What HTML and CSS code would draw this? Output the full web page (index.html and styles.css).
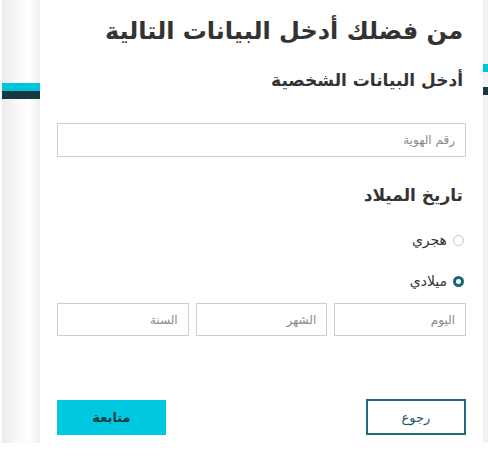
FILE: index.html
```html
<!DOCTYPE html>
<html lang="ar" dir="rtl">
<head>
  <meta charset="utf-8">
  <title>البيانات الشخصية</title>
  <meta name="viewport" content="width=device-width, initial-scale=1.0">
  <link rel="stylesheet" href="styles.css">
</head>
<body>
<div class="page">
  <aside class="side side-right">
    <span class="bar bar-cyan"></span>
    <span class="bar bar-dark"></span>
  </aside>

  <main class="card">
    <h1>من فضلك أدخل البيانات التالية</h1>
    <h2>أدخل البيانات الشخصية</h2>

    <form id="personal">
      <input class="field" type="text" placeholder="رقم الهوية">

      <h2 class="birth-title">تاريخ الميلاد</h2>

      <label class="radio">
        <input type="radio" name="calendar" value="hijri">
        <span class="dot"></span>
        هجري
      </label>
      <label class="radio">
        <input type="radio" name="calendar" value="gregorian" checked>
        <span class="dot"></span>
        ميلادي
      </label>

      <div class="date-row">
        <input class="field" type="text" placeholder="اليوم">
        <input class="field" type="text" placeholder="الشهر">
        <input class="field" type="text" placeholder="السنة">
      </div>

      <div class="actions">
        <button type="button" class="btn btn-back">رجوع</button>
        <button type="submit" class="btn btn-next">متابعة</button>
      </div>
    </form>
  </main>

  <aside class="side side-left">
    <span class="bar bar-cyan"></span>
    <span class="bar bar-dark"></span>
  </aside>
</div>
</body>
</html>
```

FILE: styles.css
```css
html {
  box-sizing: border-box;
}

*, *:before, *:after {
  box-sizing: inherit;
}

body {
  margin: 0;
  background: #fff;
  font-family: 'DejaVu Sans', 'Noto Sans', sans-serif;
  color: #333;
}

.page {
  display: flex;
  height: 443px;
}

.side {
  display: flex;
  flex-direction: column;
}

.side-left {
  width: 38px;
  margin-left: 2px;
  padding-top: 83px;
  background: linear-gradient(to right, #ebebeb, #f8f8f8 40%, #fff 70%, #eeeeee);
}

.side-right {
  width: 5px;
  padding-top: 64px;
  background: #f2f2f2;
}

.bar {
  display: block;
  height: 8px;
}

.bar-cyan {
  background: #00c3dc;
}

.bar-dark {
  background: #16383e;
}

.side-right .bar-dark {
  margin-top: 15px;
}

.card {
  flex: 1;
  padding: 13px 17px 0 17px;
  background: #fff;
}

h1 {
  margin: 0 3px 0 0;
  font-size: 24px;
  font-weight: 700;
  line-height: 36px;
  color: #333;
}

h2 {
  margin: 18px 3px 0 0;
  font-size: 17px;
  font-weight: 700;
  line-height: 26px;
  color: #333;
}

form {
  display: flex;
  flex-direction: column;
  padding-top: 30px;
}

.field {
  display: block;
  width: 100%;
  height: 34px;
  padding: 0 10px;
  border: 1px solid #c8d0d2;
  border-radius: 0;
  font-family: inherit;
  font-size: 12px;
  color: #333;
  background: #fff;
}

.field::placeholder {
  color: #8a8a8a;
}

.birth-title {
  margin-top: 25px;
  margin-bottom: 18px;
}

.radio {
  display: flex;
  align-items: center;
  gap: 6px;
  height: 28px;
  margin: 0 2px 13px 0;
  font-size: 14px;
  color: #333;
}

.radio input {
  display: none;
}

.dot {
  width: 11px;
  height: 11px;
  border: 1px solid #c4c4c4;
  border-radius: 50%;
}

.radio input:checked + .dot {
  border: 3px solid #1b6478;
}

.date-row {
  display: flex;
  gap: 7px;
  margin-top: -5px;
}

.date-row .field {
  height: 33px;
}

.actions {
  display: flex;
  justify-content: space-between;
  align-items: center;
  margin-top: 63px;
}

.btn {
  height: 35px;
  font-family: inherit;
  font-size: 13px;
  cursor: pointer;
  border-radius: 0;
}

.btn-back {
  width: 100px;
  height: 36px;
  border: 2px solid #1f6e80;
  background: #fff;
  color: #1f5966;
}

.btn-next {
  width: 109px;
  border: none;
  background: #00c8e0;
  color: #1a3c44;
  font-weight: 700;
}
```
